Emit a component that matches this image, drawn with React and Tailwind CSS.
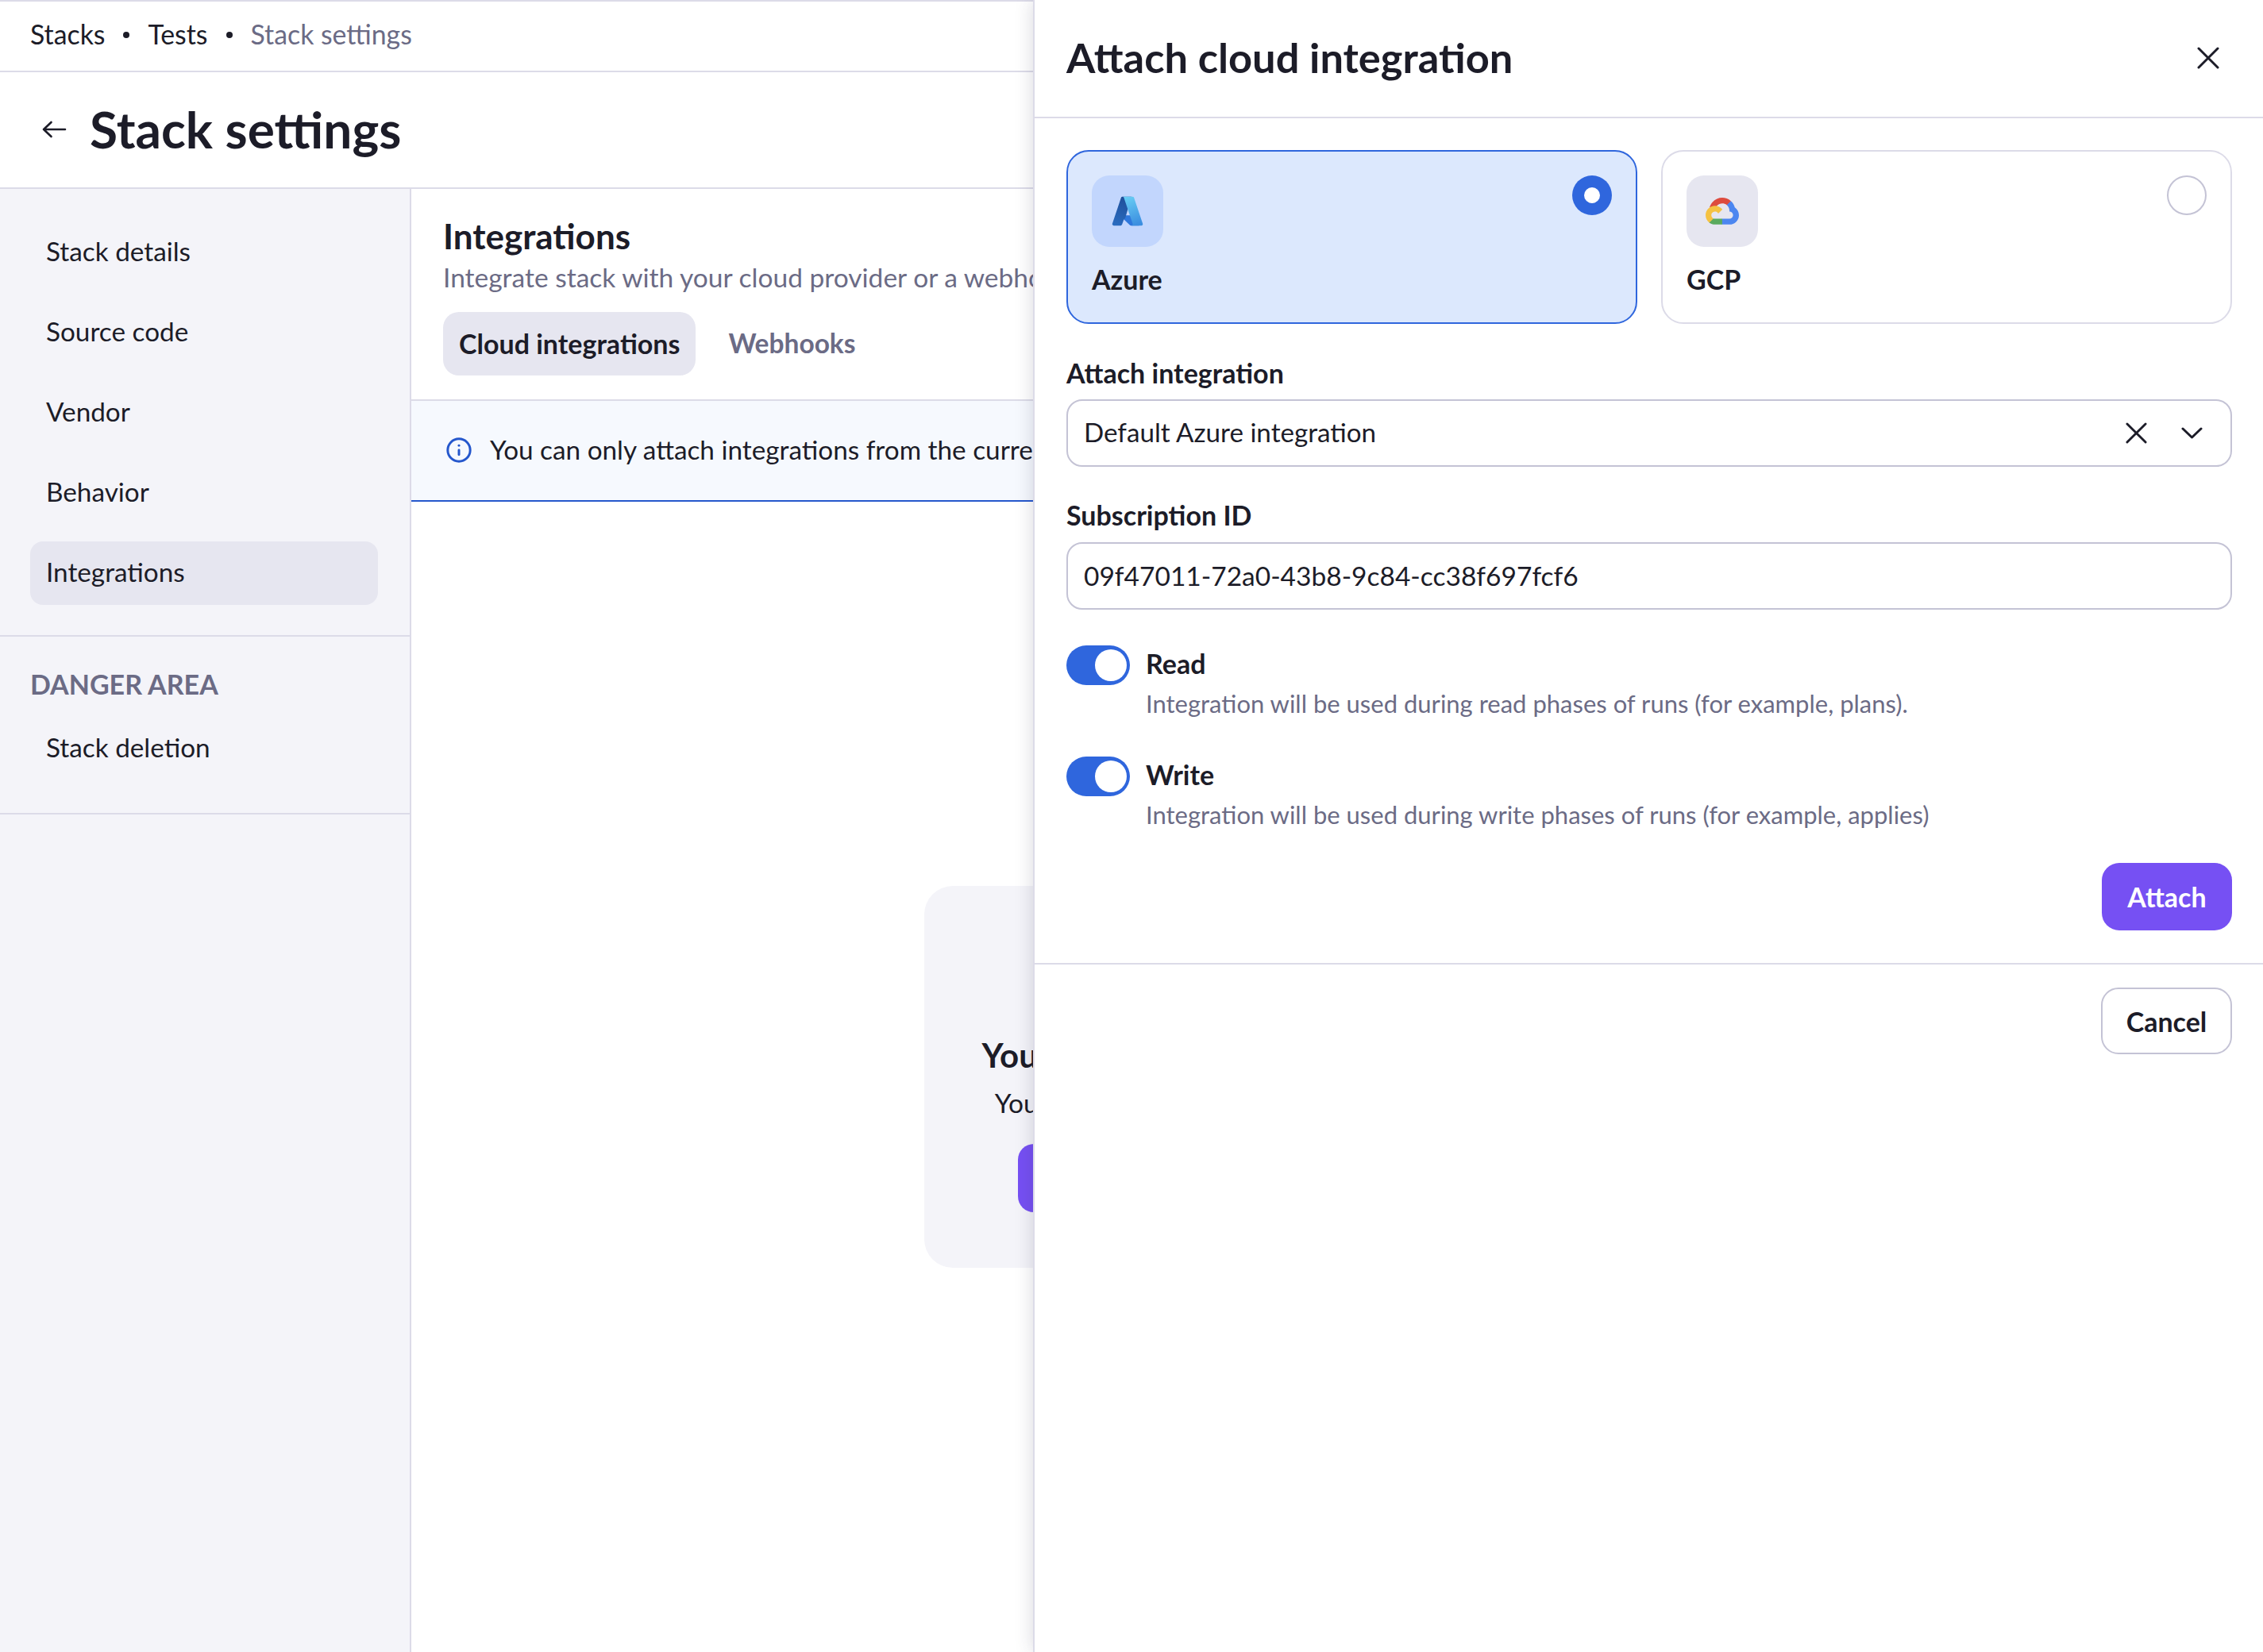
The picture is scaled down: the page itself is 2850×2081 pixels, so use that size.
import { Info } from "lucide-react";

const navItems = ["Stack details", "Source code", "Vendor", "Behavior", "Integrations"];

function CloseIcon({ className }) {
  return (
    <svg viewBox="0 0 28 28" fill="none" stroke="currentColor" strokeWidth="3" strokeLinecap="round" className={className}>
      <path d="M2 2L26 26M26 2L2 26" />
    </svg>
  );
}

function AzureLogo() {
  return (
    <svg viewBox="0 0 96 96" className="w-[42px] h-[42px]">
      <defs>
        <linearGradient id="az-a" x1="39" y1="8" x2="12" y2="88" gradientUnits="userSpaceOnUse">
          <stop offset="0" stopColor="#1f4f9a" />
          <stop offset="1" stopColor="#2a6cc0" />
        </linearGradient>
        <linearGradient id="az-c" x1="52.6" y1="3.6" x2="82.2" y2="82.6" gradientUnits="userSpaceOnUse">
          <stop offset="0" stopColor="#68cdf4" />
          <stop offset="1" stopColor="#3c8fe0" />
        </linearGradient>
      </defs>
      <path fill="#2f78dc" d="M71.175 60.261h-41.29a1.911 1.911 0 0 0-1.305 3.309l26.532 24.764a4.171 4.171 0 0 0 2.846 1.121h23.38z" />
      <path fill="url(#az-a)" d="M33.338 6.544a4.118 4.118 0 0 0-3.943 2.879L4.252 83.917a4.14 4.14 0 0 0 3.908 5.538h20.787a4.443 4.443 0 0 0 3.41-2.9l5.014-14.777 4-3.5 L59.47 6.544z" />
      <path fill="url(#az-c)" d="M66.595 9.364a4.145 4.145 0 0 0-3.928-2.82H33.648a4.146 4.146 0 0 1 3.928 2.82l25.184 74.62a4.146 4.146 0 0 1-3.928 5.472h29.02a4.146 4.146 0 0 0 3.927-5.472z" />
    </svg>
  );
}

function GcpLogo() {
  return (
    <svg viewBox="0 0 256 206" className="w-[42px] h-[34px]">
      <path fill="#DD4B3E" d="M170.2517,56.8186 L192.5047,34.5656 L193.9877,25.1956 C153.4367,-11.6774 88.9757,-7.4964 52.4207,33.9196 C42.2667,45.4226 34.7337,59.7636 30.7167,74.5726 L38.6867,73.4496 L83.1917,66.1106 L86.6277,62.5966 C106.4247,40.8546 139.8977,37.9296 162.7557,56.4286 L170.2517,56.8186 Z" />
      <path fill="#4C86F0" d="M224.2048,73.9182 C219.0898,55.0822 208.5888,38.1492 193.9878,25.1962 L162.7558,56.4282 C175.9438,67.2042 183.4568,83.4382 183.1348,100.4652 L183.1348,106.0092 C198.4858,106.0092 210.9318,118.4542 210.9318,133.8052 C210.9318,149.1572 198.4858,161.2902 183.1348,161.2902 L127.4638,161.2902 L121.9978,167.2242 L121.9978,200.5642 L127.4638,205.7952 L183.1348,205.7952 C223.0648,206.1062 255.6868,174.3012 255.9978,134.3712 C256.1858,110.1682 244.2528,87.4782 224.2048,73.9182 Z" />
      <path fill="#5AAA5E" d="M71.8704,205.7957 L127.4634,205.7957 L127.4634,161.2897 L71.8704,161.2897 C67.9094,161.2887 64.0734,160.4377 60.4714,158.7917 L52.5844,161.2117 L30.1754,183.4647 L28.2234,191.0387 C40.7904,200.5277 56.1234,205.8637 71.8704,205.7957 Z" />
      <path fill="#F5C242" d="M71.8704,61.4255 C31.9394,61.6635 -0.2366,94.2275 0.0014,134.1575 C0.1344,156.4555 10.5484,177.4455 28.2234,191.0385 L60.4714,158.7915 C46.4804,152.4705 40.2634,136.0055 46.5844,122.0155 C52.9044,108.0255 69.3704,101.8085 83.3594,108.1285 C89.5244,110.9135 94.4614,115.8515 97.2464,122.0155 L129.4944,89.7685 C115.7734,71.8315 94.4534,61.3445 71.8704,61.4255 Z" />
    </svg>
  );
}

function Toggle() {
  return (
    <div className="flex justify-end items-center w-[80px] h-[50px] shrink-0 rounded-full bg-[#2f66dd] pr-[4px]">
      <div className="w-[40px] h-[40px] rounded-full bg-white" />
    </div>
  );
}

function ToggleRow({ label, description }) {
  return (
    <div className="flex items-start gap-[20px]">
      <Toggle />
      <div className="pt-[3px]">
        <div className="text-[34px] leading-[40px] font-bold">{label}</div>
        <div className="mt-[10px] text-[31px] leading-[40px] text-[#6b6b85] whitespace-nowrap">{description}</div>
      </div>
    </div>
  );
}

function ProviderCard({ name, selected, logo }) {
  return (
    <div
      className={
        selected
          ? "h-[219px] rounded-[28px] border-2 border-[#2f66dd] bg-[#dce8fd] px-[30px] pt-[30px]"
          : "h-[219px] rounded-[28px] border-2 border-[#dcdbe8] bg-white px-[30px] pt-[30px]"
      }
    >
      <div className="flex items-start justify-between">
        <div
          className={
            selected
              ? "flex items-center justify-center w-[90px] h-[90px] rounded-[22px] bg-[#c2d6fd]"
              : "flex items-center justify-center w-[90px] h-[90px] rounded-[22px] bg-[#e6e6f0]"
          }
        >
          {logo}
        </div>
        {selected ? (
          <div className="flex items-center justify-center w-[50px] h-[50px] rounded-full bg-[#2f66dd]">
            <div className="w-[20px] h-[20px] rounded-full bg-white" />
          </div>
        ) : (
          <div className="w-[50px] h-[50px] rounded-full border-2 border-[#c4c3d5] bg-white" />
        )}
      </div>
      <div className="mt-[21px] text-[34px] leading-[40px] font-bold">{name}</div>
    </div>
  );
}

export default function App() {
  return (
    <div className="relative flex flex-col w-[2850px] h-[2081px] overflow-hidden bg-white text-[#1c1c28] [font-family:Lato,sans-serif]">
      {/* Breadcrumbs */}
      <div className="flex items-center h-[91px] shrink-0 border-y-2 border-[#dcdbe8] px-[38px] pb-[4px] text-[33.8px]">
        <span>Stacks</span>
        <span className="mx-[23px] w-[8px] h-[8px] rounded-full bg-[#1c1c28]" />
        <span>Tests</span>
        <span className="mx-[23px] w-[8px] h-[8px] rounded-full bg-[#1c1c28]" />
        <span className="text-[#6b6b85]">Stack settings</span>
      </div>

      {/* Page title */}
      <div className="flex items-center h-[147px] shrink-0 border-b-2 border-[#dcdbe8] pl-[53px] pb-[2px]">
        <svg viewBox="0 0 31 22" fill="none" stroke="currentColor" strokeWidth="2.6" strokeLinecap="round" strokeLinejoin="round" className="w-[31px] h-[22px]">
          <path d="M2 11H29M11.5 2L2 11L11.5 20" />
        </svg>
        <h1 className="ml-[29px] text-[64px] leading-[80px] font-bold">Stack settings</h1>
      </div>

      <div className="flex flex-1 min-h-0">
        {/* Sidebar */}
        <aside className="w-[518px] shrink-0 border-r-2 border-[#dcdbe8] bg-[#f4f4f9]">
          <div className="flex flex-col gap-[21px] border-b-2 border-[#dcdbe8] pl-[38px] pr-[40px] pt-[40px] pb-[38px]">
            {navItems.map((item) => (
              <div
                key={item}
                className={
                  item === "Integrations"
                    ? "flex items-center h-[80px] rounded-[16px] bg-[#e6e6f0] px-[20px] pb-[2px] text-[33.3px]"
                    : "flex items-center h-[80px] px-[20px] pb-[2px] text-[33.3px]"
                }
              >
                {item}
              </div>
            ))}
          </div>
          <div className="border-b-2 border-[#dcdbe8] px-[38px] pt-[40px] pb-[42px]">
            <div className="text-[34px] leading-[40px] font-bold text-[#6b6b85]">DANGER AREA</div>
            <div className="flex items-center h-[80px] mt-[20px] px-[20px] text-[33.3px]">Stack deletion</div>
          </div>
        </aside>

        {/* Main */}
        <main className="flex flex-col flex-1 min-w-0">
          <div className="border-b-2 border-[#dcdbe8] px-[40px] pt-[36px] pb-[30px]">
            <h2 className="text-[44px] leading-[46px] font-bold">Integrations</h2>
            <p className="mt-[9px] text-[33.5px] leading-[40px] text-[#6b6b85] whitespace-nowrap">
              Integrate stack with your cloud provider or a webhook
            </p>
            <div className="flex gap-[21px] mt-[24px]">
              <div className="flex items-center h-[80px] rounded-[20px] bg-[#e6e6f0] px-[20px] pb-[2px] text-[34px] font-bold">Cloud integrations</div>
              <div className="flex items-center h-[80px] px-[20px] pb-[2px] text-[33.5px] font-bold text-[#6b6b85]">Webhooks</div>
            </div>
          </div>
          <div className="flex items-center gap-[22px] h-[127px] shrink-0 border-b-2 border-[#2557cc] bg-[#f6f9fe] pl-[43px] pb-[2px] text-[33.3px] whitespace-nowrap">
            <Info size={34} strokeWidth={2.1} className="text-[#2557cc]" />
            <span>You can only attach integrations from the current space</span>
          </div>
          <div className="flex flex-1 items-center justify-center">
            <div className="flex flex-col items-center justify-center w-[1040px] h-[481px] rounded-[36px] bg-[#f4f4f9] pt-[118px]">
              <div className="text-[42px] leading-[48px] font-bold whitespace-nowrap">You do not have any attached cloud integrations</div>
              <div className="mt-[16px] text-[33.5px] leading-[40px] whitespace-nowrap">You can attach cloud integrations from a list of integrations</div>
              <div className="flex items-center justify-center w-[804px] h-[86px] mt-[32px] rounded-[20px] bg-[#7650f3] text-[34px] font-bold text-white">Attach</div>
            </div>
          </div>
        </main>
      </div>

      {/* Slide-over panel */}
      <div className="absolute top-0 right-0 bottom-0 w-[1549px] border-l-2 border-[#dcdbe8] bg-white shadow-[0_0_22px_rgba(40,40,70,0.18)]">
        <div className="flex items-center justify-between h-[149px] border-b-2 border-[#dcdbe8] pl-[40px] pr-[55px] pb-[4px]">
          <h2 className="text-[52.4px] leading-[60px] font-bold">Attach cloud integration</h2>
          <CloseIcon className="w-[28px] h-[28px] mt-[3px]" />
        </div>

        <div className="pl-[40px] pr-[39px] pt-[40px] pb-[41px] border-b-2 border-[#dcdbe8]">
          <div className="grid grid-cols-2 gap-[30px]">
            <ProviderCard name="Azure" selected logo={<AzureLogo />} />
            <ProviderCard name="GCP" logo={<GcpLogo />} />
          </div>

          <label className="block mt-[42px] text-[34px] leading-[40px] font-bold">Attach integration</label>
          <div className="flex items-center h-[85px] mt-[13px] rounded-[20px] border-2 border-[#c4c3d5] pl-[20px] pr-[35px] pb-[1px] text-[33.2px]">
            <span className="flex-1">Default Azure integration</span>
            <CloseIcon className="w-[27px] h-[27px]" />
            <svg viewBox="0 0 27 15" fill="none" stroke="currentColor" strokeWidth="3" strokeLinecap="round" strokeLinejoin="round" className="w-[27px] h-[15px] ml-[43px]">
              <path d="M2 2L13.5 13L25 2" />
            </svg>
          </div>

          <label className="block mt-[41px] text-[34px] leading-[40px] font-bold">Subscription ID</label>
          <input
            readOnly
            value="09f47011-72a0-43b8-9c84-cc38f697fcf6"
            className="block w-full h-[85px] mt-[14px] rounded-[20px] border-2 border-[#c4c3d5] px-[20px] pb-[1px] text-[33.5px] outline-none"
          />

          <div className="flex flex-col gap-[47px] mt-[45px]">
            <ToggleRow label="Read" description="Integration will be used during read phases of runs (for example, plans)." />
            <ToggleRow label="Write" description="Integration will be used during write phases of runs (for example, applies)" />
          </div>

          <div className="flex justify-end mt-[41px]">
            <button className="w-[164px] h-[85px] rounded-[22px] bg-[#7650f3] text-[34px] font-bold text-white">Attach</button>
          </div>
        </div>

        <div className="flex justify-end pl-[40px] pr-[39px] pt-[29px]">
          <button className="w-[165px] h-[84px] rounded-[22px] border-2 border-[#c4c3d5] bg-white text-[34px] font-bold">Cancel</button>
        </div>
      </div>
    </div>
  );
}
